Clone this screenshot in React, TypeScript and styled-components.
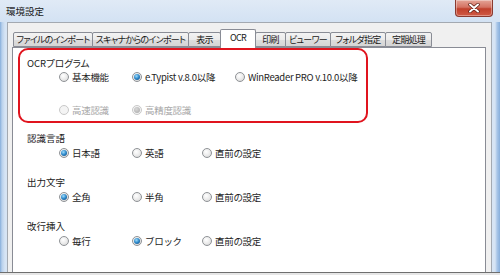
import styled, { createGlobalStyle } from 'styled-components'

const GlobalStyle = createGlobalStyle`
  html, body {
    margin: 0;
    padding: 0;
    background: #ffffff;
  }
  body {
    font-family: "Noto Sans CJK JP", "Noto Sans", sans-serif;
  }
`

interface ITab {
  label: string
  width: number
  active?: boolean
}

interface IOption {
  label: string
  checked?: boolean
  disabled?: boolean
}

interface IGroup {
  title: string
  columns: number[]
  rows: IOption[][]
}

const TABS: ITab[] = [
  { label: 'ファイルのインポート', width: 80 },
  { label: 'スキャナからのインポート', width: 97 },
  { label: '表示', width: 33 },
  { label: 'OCR', width: 36, active: true },
  { label: '印刷', width: 31 },
  { label: 'ビューワー', width: 46 },
  { label: 'フォルダ指定', width: 56 },
  { label: '定期処理', width: 47 },
]

const OCR_GROUP: IGroup = {
  title: 'OCRプログラム',
  columns: [73, 103],
  rows: [
    [
      { label: '基本機能' },
      { label: 'e.Typist v.8.0以降', checked: true },
      { label: 'WinReader PRO v.10.0以降' },
    ],
    [
      { label: '高速認識', disabled: true },
      { label: '高精度認識', checked: true, disabled: true },
    ],
  ],
}

const GROUPS: IGroup[] = [
  {
    title: '認識言語',
    columns: [73, 70],
    rows: [[{ label: '日本語', checked: true }, { label: '英語' }, { label: '直前の設定' }]],
  },
  {
    title: '出力文字',
    columns: [73, 70],
    rows: [[{ label: '全角', checked: true }, { label: '半角' }, { label: '直前の設定' }]],
  },
  {
    title: '改行挿入',
    columns: [73, 70],
    rows: [[{ label: '毎行' }, { label: 'ブロック', checked: true }, { label: '直前の設定' }]],
  },
]

const Window = styled.div`
  width: 500px;
  height: 275px;
  overflow: hidden;
  display: flex;
  flex-direction: column;
  background: linear-gradient(to right, #86aedb 0, #b9d1ec 2px, #d6e4f4 5px, #d6e4f4 495px, #a9c6e8 497px, #86aedb 500px);
`

const TitleBar = styled.div`
  height: 22px;
  flex: none;
  display: flex;
  align-items: flex-start;
  justify-content: space-between;
  background: linear-gradient(#e0eaf6, #d3e2f3);
`

const Title = styled.span`
  padding: 5px 0 0 6px;
  font-size: 9.5px;
  line-height: 12px;
  color: #1a1a1a;
`

const CloseButton = styled.div`
  width: 38px;
  height: 17px;
  margin-right: 7px;
  box-sizing: border-box;
  border: 1px solid #8a3a30;
  border-top: none;
  border-radius: 0 0 4px 4px;
  background: linear-gradient(#e4a497 0%, #d47262 45%, #c0402c 55%, #d05a45 100%);
  display: flex;
  align-items: center;
  justify-content: center;
  box-shadow: inset 0 0 0 1px rgba(255, 255, 255, 0.35);
`

const Client = styled.div`
  flex: 1;
  display: flex;
  flex-direction: column;
  margin: 0 8px 0 7px;
  padding: 6px 5px 0 4px;
  background: #f0f0f0;
  border: 1px solid #a3a9b1;
  border-bottom: none;
  min-height: 0;
`

const TabStrip = styled.div`
  display: flex;
  align-items: flex-end;
  height: 18px;
  flex: none;
  padding-left: 1px;
  position: relative;
  z-index: 1;
`

const Tab = styled.div<{ $w: number; $active?: boolean }>`
  width: ${(p) => p.$w}px;
  height: ${(p) => (p.$active ? 19 : 15)}px;
  margin-left: -1px;
  margin-bottom: ${(p) => (p.$active ? -1 : 0)}px;
  box-sizing: border-box;
  border: 1px solid #898c95;
  border-bottom: ${(p) => (p.$active ? 'none' : '1px solid #898c95')};
  border-radius: 2px 2px 0 0;
  background: ${(p) =>
    p.$active ? '#ffffff' : 'linear-gradient(#f3f3f3 0%, #ebebeb 50%, #dedede 51%, #d5d5d5 100%)'};
  display: flex;
  align-items: center;
  justify-content: center;
  overflow: hidden;
  font-size: 9px;
  font-feature-settings: "palt";
  letter-spacing: -0.7px;
  color: #1a1a1a;
  white-space: nowrap;
  padding-bottom: ${(p) => (p.$active ? 3 : 0)}px;
  &:first-child {
    margin-left: 0;
  }
`

const Panel = styled.div`
  flex: 1;
  background: #ffffff;
  border: 1px solid #898c95;
  border-bottom: none;
  padding: 0 0 0 5px;
  display: flex;
  flex-direction: column;
  align-items: flex-start;
`

const Highlight = styled.div`
  width: 350px;
  height: 75px;
  box-sizing: border-box;
  border: 2px solid #e0141e;
  border-radius: 10px;
  padding: 6px 0 0 7px;
`

const Section = styled.div<{ $first?: boolean }>`
  margin-top: ${(p) => (p.$first ? 8 : 15)}px;
  padding-left: 9px;
  display: flex;
  flex-direction: column;
  gap: 1px;
`

const GroupTitle = styled.div`
  font-size: 9.5px;
  line-height: 14px;
  height: 14px;
  color: #1a1a1a;
  font-feature-settings: "palt";
`

const OptionGrid = styled.div<{ $cols: string; $indent: number }>`
  display: grid;
  grid-template-columns: ${(p) => p.$cols};
  grid-auto-rows: 14px;
  row-gap: 19px;
  padding-left: ${(p) => p.$indent}px;
`

const Option = styled.label<{ $disabled?: boolean }>`
  display: flex;
  align-items: center;
  gap: 3px;
  height: 14px;
  font-size: 9.5px;
  white-space: nowrap;
  color: ${(p) => (p.$disabled ? '#a8a8a8' : '#1e1e1e')};
  letter-spacing: -0.3px;
`

const Radio = styled.span<{ $checked?: boolean; $disabled?: boolean }>`
  width: 10px;
  height: 10px;
  flex: none;
  box-sizing: border-box;
  border-radius: 50%;
  border: 1px solid ${(p) => (p.$disabled ? '#c9c9c9' : '#8f9296')};
  background: ${(p) =>
    p.$disabled
      ? '#f4f4f4'
      : 'radial-gradient(circle at 40% 35%, #ffffff 0%, #e9e9e9 55%, #cfcfcf 100%)'};
  display: flex;
  align-items: center;
  justify-content: center;
  &::after {
    content: '';
    display: ${(p) => (p.$checked ? 'block' : 'none')};
    width: 6px;
    height: 6px;
    border-radius: 50%;
    background: ${(p) =>
      p.$disabled
        ? 'radial-gradient(circle at 40% 35%, #d8d8d8, #a6a6a6)'
        : 'radial-gradient(circle at 40% 35%, #9fdcfb 0%, #2a86c8 50%, #173f6e 100%)'};
  }
`

const Footer = styled.div`
  height: 2px;
  flex: none;
  border-top: 1px solid #6f6f6f;
  background: #e6e6e6;
`

const CloseGlyph = () => (
  <svg width="12" height="10" viewBox="0 0 12 10">
    <path d="M2 1.5 L10 8.5 M10 1.5 L2 8.5" stroke="#5a1c14" strokeWidth="3.4" strokeLinecap="round" />
    <path d="M2 1.5 L10 8.5 M10 1.5 L2 8.5" stroke="#ffffff" strokeWidth="2" strokeLinecap="round" />
  </svg>
)

const OptionRows = ({ group, indent }: { group: IGroup; indent: number }) => (
  <OptionGrid $cols={`${group.columns.map((c) => `${c}px`).join(' ')} auto`} $indent={indent}>
    {group.rows.map((row) =>
      row.map((opt) => (
        <Option key={opt.label} $disabled={opt.disabled}>
          <Radio $checked={opt.checked} $disabled={opt.disabled} />
          {opt.label}
        </Option>
      )),
    )}
  </OptionGrid>
)

const App = () => {
  return (
    <>
      <GlobalStyle />
      <Window>
        <TitleBar>
          <Title>環境設定</Title>
          <CloseButton>
            <CloseGlyph />
          </CloseButton>
        </TitleBar>
        <Client>
          <TabStrip>
            {TABS.map((tab) => (
              <Tab key={tab.label} $w={tab.width} $active={tab.active}>
                {tab.label}
              </Tab>
            ))}
          </TabStrip>
          <Panel>
            <Highlight>
              <GroupTitle>{OCR_GROUP.title}</GroupTitle>
              <OptionRows group={OCR_GROUP} indent={32} />
            </Highlight>
            {GROUPS.map((group, i) => (
              <Section key={group.title} $first={i === 0}>
                <GroupTitle>{group.title}</GroupTitle>
                <OptionRows group={group} indent={32} />
              </Section>
            ))}
          </Panel>
        </Client>
        <Footer />
      </Window>
    </>
  )
}

export default App
